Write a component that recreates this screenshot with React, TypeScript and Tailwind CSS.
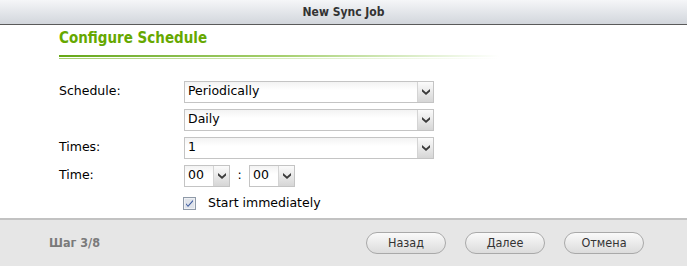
import React from "react";

const cond = { fontFamily: '"DejaVu Sans Condensed", "DejaVu Sans", sans-serif' };
const verdana = { fontFamily: '"DejaVu Sans", Verdana, sans-serif' };

function Chevron() {
  return (
    <svg width="8" height="6" viewBox="0 0 8 6">
      <path d="M0 0 L4 3.5 L8 0 L8 2.5 L4 6 L0 2.5 Z" fill="#3a3a3a" />
    </svg>
  );
}

function Select({ value, width }: { value: string; width: string }) {
  return (
    <div className={`${width} h-[22px] flex border border-[#c4c4c4] bg-white`}>
      <div className="flex-1 flex items-center pl-[3px] text-[12.5px] text-black bg-gradient-to-b from-[#f3f3f3] to-white to-40%" style={verdana}>
        {value}
      </div>
      <div className="w-[16px] flex items-center justify-center border-l border-[#d4d4d4] bg-gradient-to-b from-[#fbfbfb] to-[#d6d6d6]">
        <Chevron />
      </div>
    </div>
  );
}

export default function App() {
  return (
    <div className="w-[687px] h-[266px] bg-white flex flex-col overflow-hidden">
      {/* Title bar */}
      <div className="h-[25px] shrink-0 border-b border-[#5a5a5a] bg-gradient-to-b from-[#f5f6f8] to-[#d2d6dc] flex items-center justify-center">
        <span className="text-[12px] font-bold text-[#333]" style={cond}>New Sync Job</span>
      </div>

      {/* Content */}
      <div className="flex-1 flex flex-col pl-[59px]">
        <div className="mt-[2px] text-[15px] font-bold text-[#66a800]" style={cond}>Configure Schedule</div>
        <div className="mt-[5px] h-[2px] w-[440px] bg-gradient-to-r from-[#66a812] via-[#a5cf6c] to-white" />
        <div className="mt-[1px] h-[1px] w-[440px] bg-gradient-to-r from-[#a6cf70] via-[#d6ebbd] to-white" />

        <div className="mt-[22px] flex flex-col gap-[6px] text-[12.5px] text-black" style={verdana}>
          <div className="flex items-center">
            <div className="w-[125px]">Schedule:</div>
            <Select value="Periodically" width="w-[250px]" />
          </div>
          <div className="flex items-center">
            <div className="w-[125px]" />
            <Select value="Daily" width="w-[250px]" />
          </div>
          <div className="flex items-center">
            <div className="w-[125px]">Times:</div>
            <Select value="1" width="w-[250px]" />
          </div>
          <div className="flex items-center">
            <div className="w-[125px]">Time:</div>
            <Select value="00" width="w-[46px]" />
            <span className="w-[19px] text-center">:</span>
            <Select value="00" width="w-[46px]" />
          </div>
          <div className="flex items-center h-[22px]">
            <div className="w-[125px]" />
            <svg width="13" height="13" viewBox="0 0 13 13" className="ml-[-1px]">
              <rect x="0.5" y="0.5" width="12" height="12" fill="#eef0f4" stroke="#8f9aa8" />
              <rect x="2" y="2" width="9" height="9" fill="#dfe3ea" />
              <path d="M3 6.2 L5 8.6 L9.8 3 L10 4.4 L5 10 L3 7.6 Z" fill="#3c5aa0" />
            </svg>
            <span className="ml-[12px]">Start immediately</span>
          </div>
        </div>
      </div>

      {/* Footer */}
      <div className="h-[48px] shrink-0 border-t-2 border-[#c2c2c2] bg-[#e6e6e6] flex items-center pl-[49px] pr-[43px]">
        <span className="text-[12.5px] font-bold text-[#7a7a7a]" style={cond}>Шаг 3/8</span>
        <div className="ml-auto flex gap-[19px]">
          {["Назад", "Далее", "Отмена"].map((t) => (
            <button
              key={t}
              className="w-[80px] h-[22px] rounded-full border border-[#a9a9a9] bg-gradient-to-b from-[#fafafa] to-[#dcdcdc] text-[12.5px] text-[#333] flex items-center justify-center"
              style={cond}
            >
              {t}
            </button>
          ))}
        </div>
      </div>
    </div>
  );
}
